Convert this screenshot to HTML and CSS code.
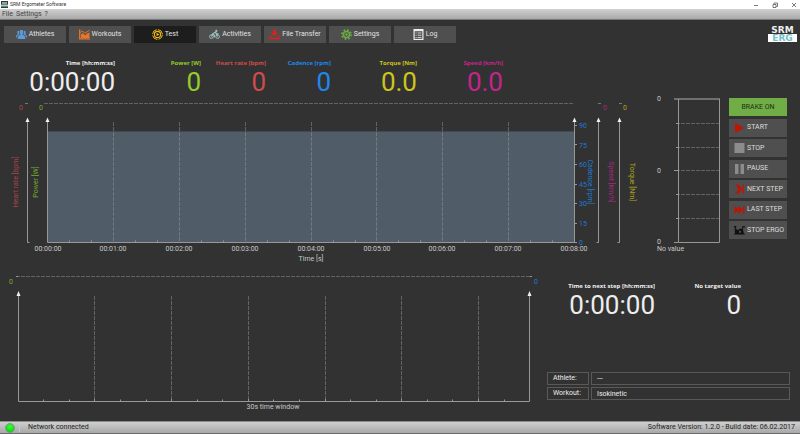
FILE: index.html
```html
<!DOCTYPE html>
<html lang="en">
<head>
<meta charset="utf-8">
<title>SRM Ergometer Software</title>
<link rel="stylesheet" href="styles.css">
</head>
<body>
<header class="titlebar">
  <svg class="app-icon" viewBox="0 0 7 7" aria-hidden="true"><rect width="7" height="7" fill="#2f3c3c"/><path d="M1 2h5" stroke="#fff"/><path d="M0 4.5h7" stroke="#a7cfc9" stroke-width="2"/></svg>
  <span class="app-title">SRM Ergometer Software</span>
  <button class="win" aria-label="Minimize"><svg viewBox="0 0 6 6"><path d="M1 3.5h4"/></svg></button>
  <button class="win" aria-label="Restore"><svg viewBox="0 0 6 6"><path d="M1 2.5h3v3h-3zM2 2V1h3.500v3.500H4.500"/></svg></button>
  <button class="win" aria-label="Close"><svg viewBox="0 0 6 6"><path d="M1 1l4 4M5 1L1 5"/></svg></button>
</header>
<nav class="menubar">
  <button>File</button><button>Settings</button><button>?</button>
</nav>

<main>
  <div class="top">
    <nav class="tabs">
      <button class="tab"><svg viewBox="0 0 12 10" fill="#5b9bd8"><path d="M4 1.200C4.500-.2 7.500-.2 8 1.200c.2 1.500-.2 2.600-.8 3.200l.1.800L9.500 6.300l.7 3.500H1.800l.7-3.500 2.200-1.100.1-.8C4.200 3.800 3.800 2.700 4 1.200z"/><path d="M3.400 1C1.800.6 1.200 1.700 1.400 3l.5 1.700L.3 5.800 0 8.200h1.300l.5-2.400 2.100-1.100C3.200 3.500 3 2.200 3.400 1zM8.600 1c1.600-.4 2.200.7 2 2l-.5 1.700 1.600 1.100.3 2.400h-1.300l-.5-2.400-2.100-1.100C8.800 3.500 9 2.200 8.600 1z"/></svg>Athletes</button>
      <button class="tab"><svg viewBox="0 0 11 10" fill="none" stroke="#e8752a"><path d="M.7 0v9.300H11" stroke-width="1.300"/><path d="M2 8.500V5l2-1.500L6 6l2-2 2.500-1v5.500z" fill="#e8752a" stroke="none"/><path d="M1.500 3L3.500 1.500l2.300 2.300L10.500.800" stroke-width="1"/></svg>Workouts</button>
      <button class="tab active"><svg viewBox="0 0 11 11" fill="none" stroke="#f3b713"><circle cx="5.500" cy="5.500" r="4.900" stroke-width="1" stroke-dasharray="6.300 1.400"/><circle cx="5.500" cy="5.500" r="3.100" stroke-width="1.100"/><path d="M4.500 3.700l3 1.800-3 1.800z" fill="#f3b713" stroke="none"/></svg>Test</button>
      <button class="tab"><svg viewBox="0 0 12 10" fill="none" stroke="#9bc4c1"><circle cx="2.600" cy="7.300" r="2" /><circle cx="9.400" cy="7.300" r="2"/><path d="M2.600 7.300L4 4.300l3-2 1.300 2h2M4 4.300l2 1.500-.3 2.500M9.400 7.300L7.500 3.500" stroke-width="1.300"/><circle cx="8" cy="1.100" r="1.200" fill="#9bc4c1" stroke="none"/></svg>Activities</button>
      <button class="tab"><svg viewBox="0 0 12 11"><path d="M4.500 0h3v3.500h2.200L6 7.500 2.300 3.500h2.200z" fill="#e0201b"/><path d="M.8 6.500V10h10.400V6.500M2.500 8h1.300M8.200 8h1.300" fill="none" stroke="#e0201b" stroke-width="1.500"/></svg>File Transfer</button>
      <button class="tab"><svg viewBox="0 0 12 12" fill="none" stroke="#69ac41"><circle cx="6" cy="6" r="4.900" stroke-width="2" stroke-dasharray="1.900 1.948"/><circle cx="6" cy="6" r="3.300" stroke-width="1.700"/><circle cx="6" cy="6" r="1" fill="#69ac41"/></svg>Settings</button>
      <button class="tab"><svg viewBox="0 0 10 11"><rect x=".6" y=".6" width="8.800" height="9.800" fill="#444" stroke="#eee" stroke-width="1.200"/><path d="M.5 1.500h9" stroke="#eee" stroke-width="1.500"/><path d="M2 4h1.200M2 6.200h1.200M2 8.400h1.200M4 4h4M4 6.200h4M4 8.400h4" stroke="#ddd"/></svg>Log</button>
    </nav>
    <div class="logo"><span>SRM</span><span class="erg">ERG</span></div>
  </div>

  <section class="metrics">
    <div class="metric"><h2>Time [hh:mm:ss]</h2><output>0:00:00</output></div>
    <div class="metric power"><h2>Power [W]</h2><output>0</output></div>
    <div class="metric heart"><h2>Heart rate [bpm]</h2><output>0</output></div>
    <div class="metric cadence"><h2>Cadence [rpm]</h2><output>0</output></div>
    <div class="metric torque"><h2>Torque [Nm]</h2><output>0.0</output></div>
    <div class="metric speed"><h2>Speed [km/h]</h2><output>0.0</output></div>
  </section>

  <section class="live">
    <svg class="chart" viewBox="8 97 637 171" role="img" aria-label="Test course">
      <rect x="48" y="132" width="526" height="110" fill="#505d69"/>
      <path d="M48 131.500H574" stroke="#414b54"/>
      <path class="dash" d="M44 103.500H574"/>
      <path class="axis dim" d="M25 103.500h3M598 103.500h3M619 103.500h3"/>
      <path class="dash vert" d="M113.500 122V242M179.500 122V242M245.500 122V242M311.500 122V242M376.500 122V242M442.500 122V242M508.500 122V242"/>
      <path class="axis" d="M27.500 121V242.500h2M47.500 121V242.500H574.500V121M598.500 121V242.500h-2M619.500 121V242.500h-2"/>
      <path class="axis" d="M69.500 240.500v2M91.500 240.500v2M135.500 240.500v2M157.500 240.500v2M201.500 240.500v2M223.500 240.500v2M267.500 240.500v2M289.500 240.500v2M333.500 240.500v2M355.500 240.500v2M398.500 240.500v2M420.500 240.500v2M464.500 240.500v2M486.500 240.500v2M530.500 240.500v2M552.500 240.500v2"/>
      <path class="axis" d="M574 125.500h3M574 144.500h3M574 164.500h3M574 184.500h3M574 203.500h3M574 223.500h3M574 242.500h3M574 132.500h1M574 138.500h1M574 151.500h1M574 158.500h1M574 171.500h1M574 177.500h1M574 190.500h1M574 197.500h1M574 210.500h1M574 216.500h1M574 229.500h1M574 236.500h1"/>
      <path class="head" d="M27.500 117.500l2 4.500h-4zM47.500 117.500l2 4.500h-4zM574.500 117.500l2 4.500h-4zM598.500 117.500l2 4.500h-4zM619.500 117.500l2 4.500h-4z"/>
      <g class="ticks mid">
        <text x="48" y="251">00:00:00</text><text x="113" y="251">00:01:00</text><text x="179" y="251">00:02:00</text><text x="245" y="251">00:03:00</text><text x="311" y="251">00:04:00</text><text x="377" y="251">00:05:00</text><text x="442" y="251">00:06:00</text><text x="508" y="251">00:07:00</text><text x="574" y="251">00:08:00</text>
        <text x="311" y="261">Time [s]</text>
      </g>
      <g class="ticks c-heart mid"><text x="21" y="110">0</text><text transform="translate(18 182) rotate(-90)">Heart rate [bpm]</text></g>
      <g class="ticks c-power mid"><text x="41" y="110">0</text><text transform="translate(38 182) rotate(-90)">Power [W]</text></g>
      <g class="ticks c-cadence">
        <text x="579" y="128">90</text><text x="579" y="148">75</text><text x="579" y="167">60</text><text x="579" y="187">45</text><text x="579" y="206">30</text><text x="579" y="226">15</text><text x="579" y="245">0</text>
        <text class="mid" transform="translate(588 182) rotate(90)">Cadence [rpm]</text>
      </g>
      <g class="ticks c-speed mid"><text x="605" y="110">0</text><text transform="translate(609 182) rotate(90)">Speed [km/h]</text></g>
      <g class="ticks c-torque mid"><text x="625" y="110">0</text><text transform="translate(630 182) rotate(90)">Torque [Nm]</text></g>
    </svg>

    <svg class="chart" viewBox="650 97 74 171" role="img" aria-label="Target gauge">
      <path class="dash" d="M676 123.500H719M676 147.500H719M676 170.500H719M676 194.500H719M676 218.500H719"/>
      <path d="M674 99H720" stroke="#6f6f6f" stroke-width="2"/>
      <path class="axis" d="M678.500 99V242.500H719.500V99M674 170.500h4M674 242.500h4M676 123.500h2M676 147.500h2M676 194.500h2M676 218.500h2"/>
      <g class="ticks mid"><text x="659" y="101">0</text><text x="659" y="173">0</text><text x="659" y="244">0</text></g>
      <text class="ticks" x="657" y="251">No value</text>
    </svg>

    <div class="controls">
      <button class="ctl brake">BRAKE ON</button>
      <button class="ctl"><svg viewBox="0 0 11 10"><path d="M1 0l9 5-9 5z" fill="#c41200"/></svg>START</button>
      <button class="ctl"><svg viewBox="0 0 11 10"><path d="M.5 0h10v10H.5z" fill="#8c8c8c"/></svg>STOP</button>
      <button class="ctl"><svg viewBox="0 0 11 10"><path d="M1 0h3.500v10H1zM6.500 0H10v10H6.500z" fill="#8c8c8c"/></svg>PAUSE</button>
      <button class="ctl"><svg viewBox="0 0 11 10"><path d="M1.500.500h3L8 5 4.500 9.500h-3L4.500 5zM8.500.500H10v9H8.500z" fill="#c41200"/></svg>NEXT STEP</button>
      <button class="ctl"><svg viewBox="0 0 11 10"><path d="M.5 1L5 5 .5 9zM4.500 1L9 5 4.500 9zM9 1h1.500v8H9z" fill="#c41200"/></svg>LAST STEP</button>
      <button class="ctl"><svg viewBox="0 0 12 10"><path d="M0 .500h2.500V2H2v2l2.500 1L6 4l3.500-1L8.700 1H12v1.200h-1.800L9.800 4.500l1 4.500H12v1H0V9h1L.8 2H0z" fill="#111"/><circle cx="6.500" cy="7" r="1.200" fill="#555"/></svg>STOP ERGO</button>
    </div>
  </section>

  <section class="next">
    <svg class="chart" viewBox="8 272 539 142" role="img" aria-label="30s time window">
      <path class="dash" d="M16 276.500H532"/>
      <path class="dash vert" d="M94.500 296V401M171.500 296V401M248.500 296V401M325.500 296V401M401.500 296V401M478.500 296V401"/>
      <path class="axis" d="M18.500 295V401.500H529.500V295M16 276.500h2M530 276.500h2M43.500 399.500v2M69.500 399.500v2M94.500 399v2M120.500 399.500v2M146.500 399.500v2M171.500 399v2M197.500 399.500v2M222.500 399.500v2M248.500 399v2M273.500 399.500v2M299.500 399.500v2M325.500 399v2M350.500 399.500v2M376.500 399.500v2M401.500 399v2M427.500 399.500v2M452.500 399.500v2M478.500 399v2M504.500 399.500v2"/>
      <path class="head" d="M18.500 291l2 5h-4zM529.500 291l2 5h-4z"/>
      <g class="ticks mid"><text x="273" y="409">30s time window</text><text class="c-power" x="11" y="284">0</text><text class="c-cadence" x="536" y="284">0</text></g>
    </svg>
    <div class="side">
      <div class="targets">
        <div class="metric"><h2>Time to next step [hh:mm:ss]</h2><output>0:00:00</output></div>
        <div class="metric"><h2>No target value</h2><output>0</output></div>
      </div>
      <div class="info">
        <label for="athlete">Athlete:</label><input id="athlete" value="---" readonly>
        <label for="workout">Workout:</label><input id="workout" value="Isokinetic" readonly>
      </div>
    </div>
  </section>
</main>

<footer class="status">
  <span class="led"></span>
  <span class="net">Network connected</span>
  <span class="version">Software Version: 1.2.0 - Build date: 06.02.2017</span>
</footer>
</body>
</html>
```
FILE: styles.css
```css
* { box-sizing: border-box; }
body {
  margin: 0;
  min-height: 100vh;
  display: flex;
  flex-direction: column;
  background: #323232;
  color: #eee;
  font-family: Roboto, "Noto Sans", sans-serif;
  font-size: 7px;
  line-height: 9px;
}
button, input {
  margin: 0;
  padding: 0;
  border: 0;
  background: none;
  color: inherit;
  font: inherit;
}
svg { display: block; }

.titlebar {
  display: flex;
  align-items: center;
  gap: 2px;
  height: 9px;
  padding: 0 3px 0 1px;
  background: #fff;
  color: #333;
}
.app-icon { width: 7px; height: 7px; }
.app-title { flex: 1; font-size: 5px; }
.win { width: 6px; margin-left: 11px; }
.win svg { width: 6px; height: 6px; fill: none; stroke: #444; stroke-width: 0.7; }

.menubar {
  display: flex;
  align-items: center;
  gap: 3px;
  height: 11px;
  padding: 0 2px;
  background: linear-gradient(#d0d0d0, #a9a9a9);
  border-bottom: 1px solid #747774;
  color: #444;
}

main { flex: 1; display: flex; flex-direction: column; padding-top: 6px; }
.top { display: flex; justify-content: space-between; padding: 0 3px 0 4px; }
.tabs { display: flex; gap: 3px; }
.tab {
  display: flex;
  align-items: center;
  justify-content: center;
  gap: 2px;
  width: 62px;
  height: 17px;
  background: #4f4f4f;
  color: #e2e2e2;
}
.tab svg { width: 11px; height: 11px; }
.tab.active { background: #1d1d1d; }

.logo {
  display: flex;
  flex-direction: column;
  width: 29px;
  font-family: "DejaVu Sans", sans-serif;
  font-weight: bold;
  font-size: 9px;
  line-height: 8px;
  text-align: center;
}
.logo .erg { background: #fff; color: #74c0c4; }

.metrics {
  display: grid;
  grid-template-columns: 115fr 86fr 65fr 65fr 86fr 86fr 297fr;
  margin-top: 16px;
}
.metric { text-align: right; white-space: nowrap; }
.metric h2 {
  margin: 0;
  font-family: "Open Sans", "Noto Sans", sans-serif;
  font-size: 6px;
  line-height: 8px;
  font-weight: bold;
}
.metric output { display: block; font-size: 26px; line-height: 30px; }
.power { color: #93cc2b; }
.heart { color: #cf4c4c; }
.cadence { color: #1f87ee; }
.torque { color: #cdc41d; }
.speed { color: #c4248c; }

.live {
  display: grid;
  grid-template-columns: 637fr 74fr 58px;
  gap: 5px;
  align-items: start;
  padding: 0 13px 0 8px;
}
.chart { width: 100%; height: auto; overflow: visible; }
.axis { fill: none; stroke: #989898; }
.axis.dim { stroke: #777; }
.dash { fill: none; stroke: #626262; stroke-dasharray: 4 1; }
.vert { stroke: #8c969f; stroke-opacity: 0.5; }
.head { fill: #f2f2f2; }
.ticks { font-size: 7px; fill: #c8c8c8; }
.mid { text-anchor: middle; }
.c-power { fill: #7cab2c; }
.c-heart { fill: #b04444; }
.c-cadence { fill: #1f7ad2; }
.c-speed { fill: #a8267f; }
.c-torque { fill: #aba31d; }

.controls {
  display: grid;
  align-self: stretch;
  align-content: space-between;
  padding: 1px 0 29px;
}
.ctl {
  display: flex;
  align-items: center;
  gap: 2px;
  height: 18px;
  padding-left: 5px;
  background: #4f4f4f;
  color: #ddd;
}
.ctl svg { width: 11px; height: 10px; }
.ctl.brake { justify-content: center; padding: 0; background: #70ad47; color: #203010; }

.next {
  display: grid;
  grid-template-columns: 539fr 243fr;
  padding: 4px 10px 0 8px;
}
.side { display: flex; flex-direction: column; justify-content: space-between; padding: 10px 0 14px; }
.targets { display: grid; grid-template-columns: 108fr 86fr 49fr; }
.info { display: grid; grid-template-columns: 42px 1fr; gap: 2px; }
.info label, .info input {
  width: 100%;
  height: 13px;
  padding: 0 5px;
  border: 1px solid #595959;
  line-height: 11px;
}

.status {
  display: flex;
  align-items: center;
  height: 13px;
  padding: 0 5px;
  background: linear-gradient(#cfcfcf, #a8a8a8);
  border-top: 1px solid #8c8c8c;
  border-bottom: 1px solid #6c6c6c;
  color: #222;
}
.led {
  width: 10px;
  height: 10px;
  border: 1px solid #7d9a7d;
  border-radius: 50%;
  background: radial-gradient(circle at 50% 35%, #3cff3c, #00c800);
}
.net { flex: 1; margin-left: 4px; padding-left: 8px; border-left: 1px solid #c8c8c8; }
```
